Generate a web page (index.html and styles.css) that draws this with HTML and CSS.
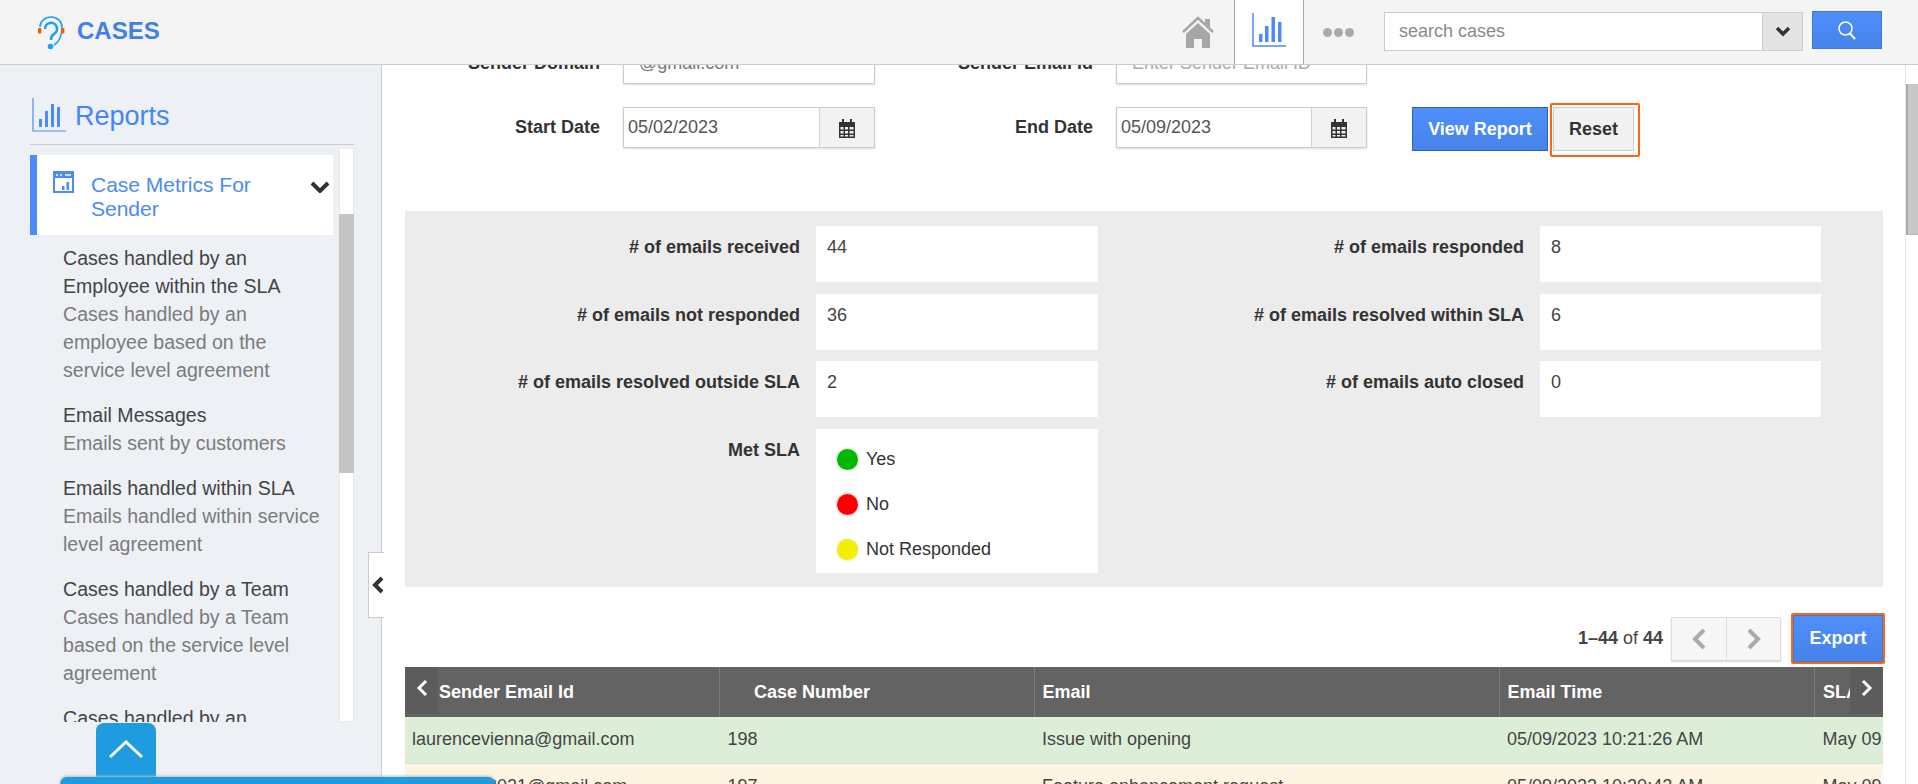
FILE: index.html
```html
<!DOCTYPE html>
<html lang="en">
  <head>
    <meta charset="UTF-8" />
    <title>Cases</title>
    <link rel="stylesheet" href="styles.css">
  </head>
  <body>
    <header class="topbar">
      <svg class="logo" viewBox="0 0 28 34" width="28" height="34">
        <path d="M3 11a11 10 0 0 1 22 0c0 9-3 15-8 18" fill="none" stroke="#1f9ff0" stroke-width="1.6" />
        <path d="M8 13a6 6 0 1 1 9 5c-2 1-3 3-3 6" fill="none" stroke="#1f9ff0" stroke-width="2.6" />
        <circle cx="13.5" cy="30.5" r="2.8" fill="#1f9ff0" />
        <rect x="1" y="12" width="3.4" height="5.5" rx="1" fill="#e0640f" />
        <rect x="24" y="12" width="3.4" height="5.5" rx="1" fill="#e0640f" />
      </svg>
      <span class="brand">CASES</span>
      <nav class="topnav">
        <a class="nav-item" href="javascript:;">
          <svg viewBox="0 0 32 32" width="32" height="32">
            <path d="M1 16 16 2l15 14" fill="none" stroke="#a6a6a6" stroke-width="2.4" />
            <path d="M23 3h5v9l-5-4.500z" fill="#a6a6a6" />
            <path d="M4 18 16 7l12 11v14H20v-9h-8v9H4z" fill="#a6a6a6" />
          </svg>
        </a>
        <a class="nav-item nav-current" href="javascript:;">
          <svg viewBox="0 0 34 34" width="34" height="34">
            <path d="M1 0v33h33" fill="none" stroke="#4b8bfb" stroke-width="1.500" />
            <path d="M7 21h3.500v8H7zM13 13h3.500v16H13zM19.500 4H23v25h-3.500zM26 9h3.500v20H26z" fill="#4b8bfb" />
          </svg>
        </a>
        <a class="nav-item nav-more" href="javascript:;"><i></i><i></i><i></i></a>
      </nav>
      <div class="search">
        <input type="text" placeholder="search cases" />
        <span class="search-drop">
          <svg class="chev" viewBox="0 0 16 11" width="16" height="11"><path d="M2 2l6 6 6-6" /></svg>
        </span>
      </div>
      <button class="btn-blue search-btn">
        <svg viewBox="0 0 20 20" width="20" height="20">
          <circle cx="8.500" cy="8.500" r="6.500" fill="none" stroke="#fff" stroke-width="1.500" />
          <path d="M13 13.500l5 5.500" stroke="#fff" stroke-width="2" />
        </svg>
      </button>
    </header>

    <div class="page">
      <aside class="sidebar">
        <h2 class="side-title">
          <svg viewBox="0 0 34 34" width="34" height="34">
            <path d="M1 0v33h33" fill="none" stroke="#4b8bfb" stroke-width="1.200" />
            <path d="M7 21h3v8H7zM13 13h3v16h-3zM19 6h3v23h-3zM25 9h3v20h-3z" fill="#4b8bfb" />
          </svg>
          Reports
        </h2>
        <div class="side-body">
          <div class="side-list">
            <div class="side-active">
              <svg viewBox="0 0 21 22" width="21" height="22">
                <path d="M1 1h19v20H1z" fill="none" stroke="#4b8bfb" stroke-width="2" />
                <rect x="1" y="1" width="19" height="6" fill="#4b8bfb" />
                <path d="M3 4h2M7 4h2M12 4h6" stroke="#fff" stroke-width="1.500" />
                <path d="M9 15h2.500v4H9zM13.500 11H16v8h-2.500z" fill="#4b8bfb" />
              </svg>
              <span class="side-active-text">Case Metrics For Sender</span>
              <svg class="chev" viewBox="0 0 20 12" width="20" height="12"><path d="M2 2l8 8 8-8" /></svg>
            </div>
            <div class="side-item">
              <b>Cases handled by an<br>Employee within the SLA</b>
              <span>Cases handled by an<br>employee based on the<br>service level agreement</span>
            </div>
            <div class="side-item">
              <b>Email Messages</b>
              <span>Emails sent by customers</span>
            </div>
            <div class="side-item">
              <b>Emails handled within SLA</b>
              <span>Emails handled within service<br>level agreement</span>
            </div>
            <div class="side-item">
              <b>Cases handled by a Team</b>
              <span>Cases handled by a Team<br>based on the service level<br>agreement</span>
            </div>
            <div class="side-item">
              <b>Cases handled by an</b>
            </div>
          </div>
          <div class="side-scroll"><div class="side-thumb"></div></div>
        </div>
      </aside>

      <main class="content">
        <div class="form-grid">
          <label class="form-label">Sender Domain</label>
          <input class="form-input input-pad" type="text" value="@gmail.com" />
          <label class="form-label label-b">Sender Email Id</label>
          <input class="form-input input-pad" type="text" placeholder="Enter Sender Email ID" />
          <span></span>

          <label class="form-label">Start Date</label>
          <div class="date-field">
            <input class="form-input" type="text" value="05/02/2023" />
            <span class="date-addon">
              <svg viewBox="0 0 18 20" width="18" height="20"><use href="#cal" /></svg>
            </span>
          </div>
          <label class="form-label label-b">End Date</label>
          <div class="date-field">
            <input class="form-input" type="text" value="05/09/2023" />
            <span class="date-addon">
              <svg viewBox="0 0 18 20" width="18" height="20"><use href="#cal" /></svg>
            </span>
          </div>
          <div class="form-actions">
            <button class="btn-blue view-btn">View Report</button>
            <span class="highlight highlight-reset"><button class="reset-btn">Reset</button></span>
          </div>
        </div>

        <section class="metrics">
          <div class="metric-label"># of emails received</div>
          <div class="metric-box">44</div>
          <div class="metric-label"># of emails responded</div>
          <div class="metric-box">8</div>
          <div class="metric-label"># of emails not responded</div>
          <div class="metric-box">36</div>
          <div class="metric-label"># of emails resolved within SLA</div>
          <div class="metric-box">6</div>
          <div class="metric-label"># of emails resolved outside SLA</div>
          <div class="metric-box">2</div>
          <div class="metric-label"># of emails auto closed</div>
          <div class="metric-box">0</div>
          <div class="metric-label">Met SLA</div>
          <div class="legend">
            <div class="legend-row"><i class="dot dot-green"></i>Yes</div>
            <div class="legend-row"><i class="dot dot-red"></i>No</div>
            <div class="legend-row"><i class="dot dot-yellow"></i>Not Responded</div>
          </div>
        </section>

        <div class="toolbar">
          <span class="count"><b>1–44</b> of <b>44</b></span>
          <div class="pager">
            <a href="javascript:;"><svg class="pager-icon" viewBox="0 0 14 22" width="14" height="22"><path d="M12 2 3 11l9 9" /></svg></a>
            <a href="javascript:;"><svg class="pager-icon" viewBox="0 0 14 22" width="14" height="22"><path d="M2 2l9 9-9 9" /></svg></a>
          </div>
          <span class="highlight"><button class="btn-blue export-btn">Export</button></span>
        </div>

        <div class="table-wrap">
          <table class="data-table">
            <colgroup>
              <col class="col-a" /><col class="col-a" /><col class="col-b" /><col class="col-c" /><col class="col-a" />
            </colgroup>
            <thead>
              <tr>
                <th class="th-first">Sender Email Id</th>
                <th class="th-case">Case Number</th>
                <th>Email</th>
                <th>Email Time</th>
                <th>SLA Time</th>
              </tr>
            </thead>
            <tbody>
              <tr class="row-green">
                <td>laurencevienna@gmail.com</td>
                <td>198</td>
                <td>Issue with opening</td>
                <td>05/09/2023 10:21:26 AM</td>
                <td>May 09, 2023</td>
              </tr>
              <tr class="row-yellow">
                <td>jessica.m2021@gmail.com</td>
                <td>197</td>
                <td>Feature enhancement request</td>
                <td>05/09/2023 10:20:42 AM</td>
                <td>May 09, 2023</td>
              </tr>
            </tbody>
          </table>
          <span class="table-arrow arrow-left"><svg viewBox="0 0 12 18" width="12" height="18"><path d="M10 2 3 9l7 7" /></svg></span>
          <span class="table-arrow arrow-right"><svg viewBox="0 0 12 18" width="12" height="18"><path d="M2 2l7 7-7 7" /></svg></span>
        </div>
      </main>

      <div class="page-scroll"><div class="page-thumb"></div></div>
    </div>

    <a class="collapse-tab" href="javascript:;">
      <svg viewBox="0 0 12 18" width="12" height="18"><path d="M10 2 3 9l7 7" /></svg>
    </a>
    <a class="up-tab" href="javascript:;">
      <svg viewBox="0 0 36 20" width="36" height="20"><path d="M2 18 18 3l16 15" /></svg>
    </a>
    <div class="bottom-bar"></div>

    <svg class="sprites" width="0" height="0">
      <symbol id="cal" viewBox="0 0 18 20">
        <path d="M1 4h16v16H1z" fill="#333" />
        <path d="M4 1h2v5H4zM12 1h2v5h-2z" fill="#333" />
        <path d="M2.500 9h3v2.500h-3zM7 9h3v2.500H7zM11.500 9h4v2.500h-4zM2.500 13h3v2.500h-3zM7 13h3v2.500H7zM11.500 13h4v2.500h-4zM2.500 17h3v1.500h-3zM7 17h3v1.500H7zM11.500 17h4v1.500h-4z" fill="#eee" />
      </symbol>
    </svg>
  </body>
</html>
```

FILE: styles.css
```css
* {
  margin: 0;
  padding: 0;
  box-sizing: border-box;
}

html,
body {
  height: 784px;
  overflow: hidden;
}

body {
  position: relative;
  font-family: "Liberation Sans", Arial, sans-serif;
  font-size: 18px;
  color: #333;
  background: #fff;
}

a {
  text-decoration: none;
}

input,
button {
  font-family: inherit;
}

.sprites {
  position: absolute;
}

.chev path,
.pager-icon path,
.table-arrow path,
.collapse-tab path,
.up-tab path {
  fill: none;
  stroke-linecap: butt;
}

/* top bar */
.topbar {
  position: relative;
  z-index: 3;
  display: flex;
  align-items: flex-start;
  height: 65px;
  background: #f4f4f4;
  border-bottom: 1px solid #ccc;
}

.logo {
  margin: 16px 0 0 37px;
}

.brand {
  margin: 17px 0 0 12px;
  font-size: 24px;
  font-weight: bold;
  line-height: 28px;
  color: #3f80ea;
}

.topnav {
  display: flex;
  margin-left: auto;
  margin-right: 20px;
}

.nav-item {
  display: flex;
  align-items: center;
  justify-content: center;
  height: 64px;
  padding-bottom: 1px;
}

.nav-item:first-child {
  width: 69px;
  padding-right: 3px;
}

.nav-current {
  width: 70px;
  background: #fff;
  border-left: 1px solid #aaa;
  border-right: 1px solid #aaa;
  padding-bottom: 4px;
}

.nav-more {
  gap: 2px;
  width: 52px;
  margin-left: 8px;
  padding-top: 2px;
}

.nav-more i {
  width: 9px;
  height: 9px;
  border-radius: 50%;
  background: #aaa;
}

.search {
  display: flex;
  width: 419px;
  height: 39px;
  margin-top: 12px;
  background: #fff;
  border: 1px solid #ccc;
}

.search input {
  flex: 1;
  min-width: 0;
  padding-left: 14px;
  border: 0;
  outline: 0;
  font-size: 18px;
}

.search input::placeholder {
  color: #8a8a8a;
  opacity: 1;
}

.search-drop {
  display: flex;
  align-items: center;
  justify-content: center;
  width: 40px;
  height: 37px;
  background: #e4e4e4;
  border-left: 1px solid #ccc;
}

.search-drop .chev path {
  stroke: #333;
  stroke-width: 3.500;
}

.btn-blue {
  background: linear-gradient(#4f8ffb, #4683ea);
  color: #fff;
  font-weight: bold;
  border: 1px solid #3f78d8;
}

.search-btn {
  display: flex;
  align-items: center;
  justify-content: center;
  width: 70px;
  height: 38px;
  margin: 11px 36px 0 9px;
}

/* layout */
.page {
  display: flex;
  height: 719px;
}

.sidebar {
  flex: none;
  width: 382px;
  padding: 33px 27px 0 30px;
  background: #edf0f5;
  border-right: 1px solid #ccc;
}

.side-title {
  display: flex;
  align-items: flex-start;
  gap: 9px;
  height: 47px;
  padding-left: 2px;
  font-size: 27px;
  font-weight: normal;
  line-height: 36px;
  color: #4486f5;
  border-bottom: 1px solid #ccc;
}

.side-body {
  display: flex;
  height: 573px;
  margin-top: 4px;
}

.side-list {
  flex: none;
  width: 309px;
  height: 573px;
  padding-top: 6px;
  overflow: hidden;
}

.side-active {
  display: flex;
  align-items: flex-start;
  width: 303px;
  height: 80px;
  padding: 16px 0 0 16px;
  background: #fff;
  border-left: 7px solid #4b8bfb;
}

.side-active-text {
  width: 190px;
  margin: 2px 0 0 17px;
  font-size: 21px;
  line-height: 24px;
  color: #4b8bf5;
}

.side-active .chev {
  margin: 10px 0 0 29px;
}

.side-active .chev path {
  stroke: #333;
  stroke-width: 4;
}

.side-item {
  margin: 9px 0 17px 33px;
  font-size: 19.570px;
  line-height: 28px;
}

.side-item + .side-item {
  margin-top: 0;
}

.side-item b {
  display: block;
  font-weight: normal;
  color: #444;
}

.side-item span {
  display: block;
  color: #7b7b7b;
}

.side-scroll {
  width: 15px;
  height: 573px;
  padding-top: 65px;
  background: #fff;
  border: 1px solid #eaeaea;
  border-width: 0 1px 1px 1px;
}

.side-thumb {
  height: 259px;
  margin: 0 -1px;
  background: #c4c4c4;
}

.content {
  flex: none;
  width: 1523px;
  padding: 0 22px 0 23px;
}

/* filter form */
.form-grid {
  display: grid;
  grid-template-columns: 218px 252px 241px 251px 1fr;
  grid-auto-rows: 41px;
  row-gap: 23px;
  margin-top: -22px;
  margin-bottom: 63px;
}

.form-label {
  align-self: center;
  padding-right: 23px;
  font-weight: bold;
  font-size: 18px;
  text-align: right;
}

.form-input {
  width: 100%;
  height: 41px;
  padding-left: 4px;
  font-size: 18px;
  color: #555;
  background: #fff;
  border: 1px solid #ccc;
  box-shadow: 0 1px 2px #ddd;
  outline: 0;
}

.input-pad {
  padding-left: 15px;
  color: #777;
}

.form-input::placeholder {
  color: #aaa;
  opacity: 1;
}

.date-field {
  display: flex;
}

.date-field .form-input {
  flex: 1;
  min-width: 0;
}

.date-addon {
  display: flex;
  flex: none;
  align-items: center;
  justify-content: center;
  width: 55px;
  height: 41px;
  background: #f2f2f2;
  border: 1px solid #ccc;
  border-left: 0;
  box-shadow: 0 1px 2px #ddd;
}

.form-actions {
  display: flex;
  align-items: flex-start;
  gap: 2px;
  margin: -4px 0 0 45px;
}

.view-btn {
  width: 136px;
  height: 44px;
  margin-top: 4px;
  font-size: 18px;
  border-color: #2f5fb8;
}

.highlight {
  display: inline-flex;
  flex: none;
  border: 2px solid #ff6410;
  border-radius: 2px;
}

.highlight-reset {
  width: 90px;
  height: 54px;
  padding: 2px 3px 4px 1px;
}

.reset-btn {
  width: 81px;
  height: 44px;
  font-size: 18px;
  font-weight: bold;
  color: #333;
  background: #f1f1f1;
  border: 1px solid #ccc;
}

/* metrics panel */
.metrics {
  display: grid;
  grid-template-columns: 411px 282px 442px 281px;
  grid-template-rows: 56px 56px 56px 144px;
  row-gap: 11.500px;
  padding: 15px 0 14.500px;
  background: #ececec;
}

.metric-label {
  padding: 12px 16px 0 0;
  font-size: 18px;
  font-weight: bold;
  line-height: 18px;
  text-align: right;
}

.metric-box {
  padding: 12px 0 0 11px;
  line-height: 18px;
  font-size: 18px;
  color: #444;
  background: #fff;
}

.legend {
  display: flex;
  flex-direction: column;
  gap: 14px;
  padding: 15px 0 0 16px;
  background: #fff;
}

.legend-row {
  display: flex;
  align-items: center;
  gap: 3px;
  height: 31px;
  font-size: 18px;
}

.dot {
  width: 31px;
  height: 31px;
  border: 4px solid #fff;
  border-radius: 50%;
  box-shadow: 0 0 0 1px #f2f2f2 inset;
}

.dot-green {
  background: #00b800;
  background-clip: padding-box;
}

.dot-red {
  background: #f00;
  background-clip: padding-box;
}

.dot-yellow {
  background: #f0f000;
  background-clip: padding-box;
}

/* pager + export */
.toolbar {
  display: flex;
  align-items: center;
  justify-content: flex-end;
  height: 51px;
  margin: 26px -2px 3px 0;
}

.count {
  margin-right: 8px;
  font-size: 18px;
  color: #444;
}

.pager {
  display: flex;
  margin-right: 10px;
  background: #f6f6f6;
  border: 1px solid #ddd;
  box-shadow: 0 1px 1px #ddd;
}

.pager a {
  display: flex;
  align-items: center;
  justify-content: center;
  width: 54px;
  height: 42px;
}

.pager a + a {
  border-left: 1px solid #ddd;
}

.pager-icon path {
  stroke: #aaa;
  stroke-width: 4;
}

.export-btn {
  width: 90px;
  height: 47px;
  font-size: 18px;
  border-color: #3f78d8;
}

/* table */
.table-wrap {
  position: relative;
  height: 117px;
  overflow: hidden;
}

.data-table {
  width: 1723px;
  table-layout: fixed;
  border-collapse: collapse;
  font-size: 18px;
  color: #444;
}

.col-a {
  width: 314.500px;
}

.col-b {
  width: 465px;
}

.col-c {
  width: 315.500px;
}

.data-table th {
  height: 50px;
  padding: 0 0 0 8px;
  text-align: left;
  font-weight: bold;
  color: #fff;
  background: #636363;
  border-right: 1px solid #7d7d7d;
}

.data-table .th-first {
  padding-left: 34px;
}

.data-table .th-case {
  padding-left: 34px;
}

.data-table td {
  height: 46px;
  padding-left: 8px;
  white-space: nowrap;
  border-bottom: 1px solid #ddd;
}

.data-table td:first-child {
  padding-left: 7px;
}

.row-green td {
  background: #ddeed8;
}

.row-yellow td {
  background: #fdf5e2;
}

.table-arrow {
  position: absolute;
  top: 0;
  display: flex;
  justify-content: center;
  width: 33px;
  height: 47px;
  padding-top: 12px;
  background: #5c5c5c;
}

.table-arrow path {
  stroke: #fff;
  stroke-width: 3;
}

.arrow-left {
  left: 0;
}

.arrow-right {
  right: 0;
}

.page-scroll {
  flex: none;
  width: 13px;
  height: 719px;
  padding-top: 19px;
  background: #fff;
  border-left: 1px solid #e4e4e4;
}

.page-thumb {
  height: 151px;
  background: #c8c8c8;
  border-left: 2px solid #a9a9a9;
  border-bottom: 1px solid #b5b5b5;
}

/* overlays */
.collapse-tab {
  position: absolute;
  left: 368px;
  top: 552px;
  z-index: 2;
  display: flex;
  align-items: center;
  justify-content: flex-end;
  width: 16px;
  height: 66px;
  background: #fff;
  border: 1px solid #ccc;
  border-right: 0;
}

.collapse-tab path {
  stroke: #333;
  stroke-width: 4;
}

.up-tab {
  position: absolute;
  left: 96px;
  top: 723px;
  z-index: 2;
  display: flex;
  align-items: center;
  justify-content: center;
  width: 60px;
  height: 56px;
  padding-bottom: 4px;
  background: #1f9ce0;
  border-radius: 8px 8px 0 0;
}

.up-tab path {
  stroke: #fff;
  stroke-width: 3;
}

.bottom-bar {
  position: absolute;
  left: 60px;
  top: 777px;
  z-index: 2;
  width: 435px;
  height: 7px;
  background: #1f9ce0;
  border-radius: 8px 8px 0 0;
  box-shadow: 0 -1px 3px #bbb;
}
```
